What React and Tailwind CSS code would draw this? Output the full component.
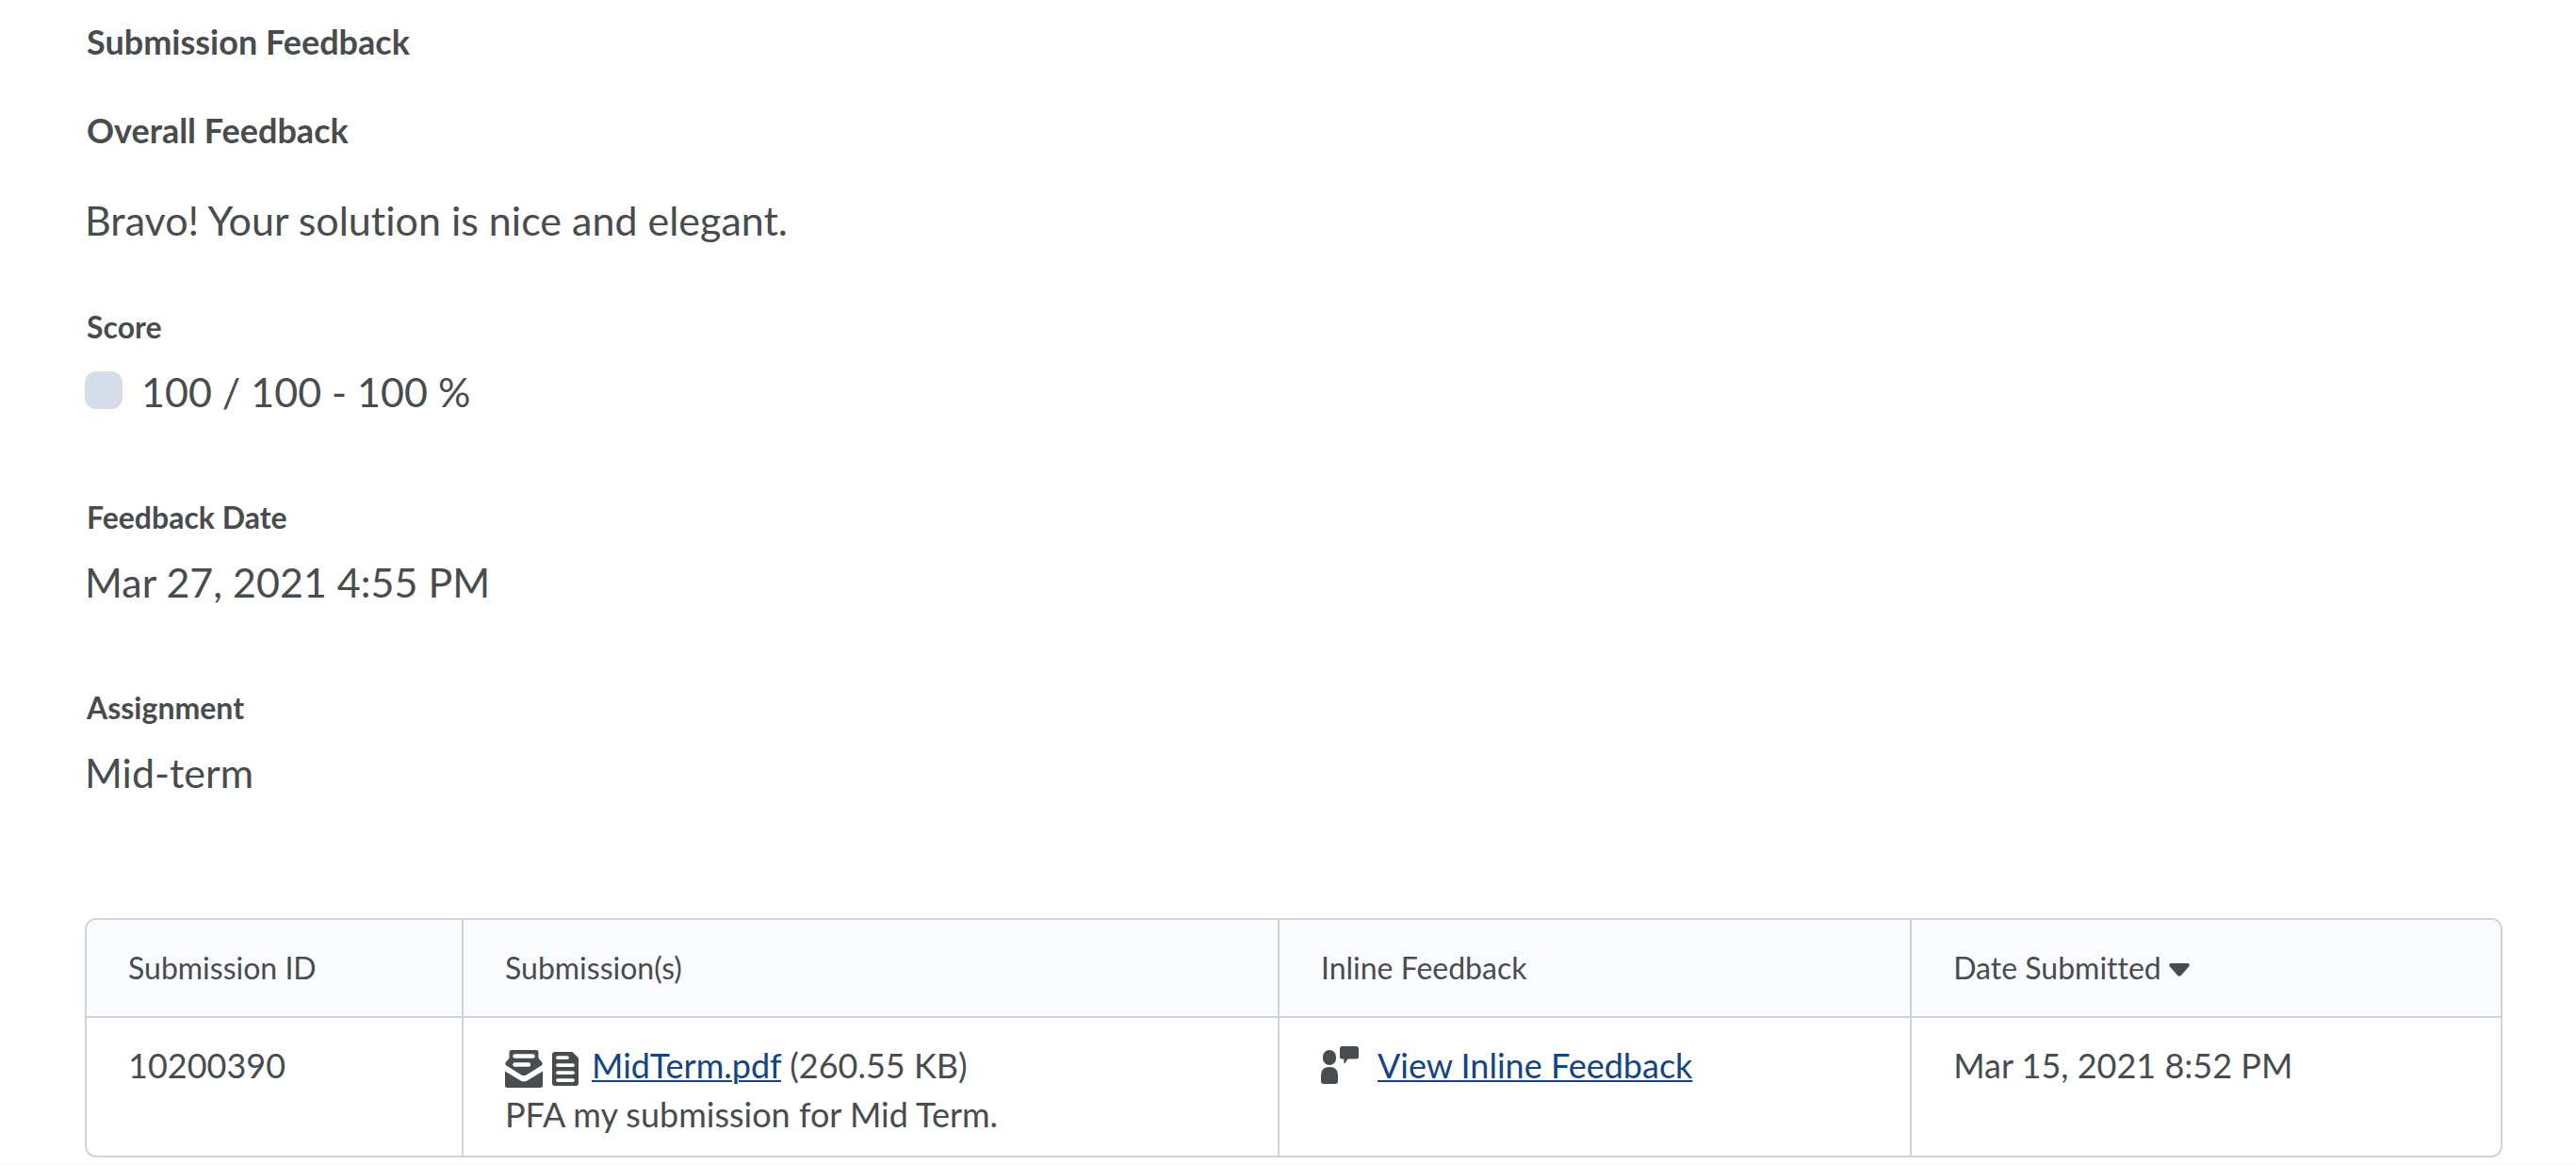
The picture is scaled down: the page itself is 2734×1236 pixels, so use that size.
function EnvelopeIcon() {
  return (
    <svg viewBox="0 0 40 40" className="mt-2 size-10 shrink-0" aria-hidden="true">
      <path
        fill="currentColor"
        fillRule="evenodd"
        d="M7 0H33Q35.500 0 35.500 2.500V8.500L39.300 13.200Q40.600 15 38.500 16.400L23 26.200Q20 28 17 26.200L1.500 16.400Q-0.600 15 0.700 13.200L4.500 8.500V2.500Q4.500 0 7 0ZM10.500 4.300A2.200 2.200 0 0 0 10.500 8.700H29.500A2.200 2.200 0 0 0 29.500 4.300ZM10.500 13.300A2.200 2.200 0 0 0 10.500 17.700H25A2.200 2.200 0 0 0 25 13.300Z"
      />
      <path
        fill="currentColor"
        d="M0 22.500L16.500 32.600Q20 34.600 23.500 32.600L40 22.500V37.500Q40 40 37.500 40H2.500Q0 40 0 37.500Z"
      />
    </svg>
  );
}

function DocumentIcon() {
  return (
    <svg viewBox="0 0 40 40" className="mt-2 ml-1 size-10 shrink-0" aria-hidden="true">
      <path
        fill="currentColor"
        fillRule="evenodd"
        d="M9 2H27.500L34 8.500V35Q34 38 31 38H9Q6 38 6 35V5Q6 2 9 2ZM12 6.200A1.900 1.900 0 0 0 12 10H22A1.900 1.900 0 0 0 22 6.200ZM12 14.200A1.900 1.900 0 0 0 12 18H28A1.900 1.900 0 0 0 28 14.200ZM12 22.200A1.900 1.900 0 0 0 12 26H28A1.900 1.900 0 0 0 28 22.200ZM12 30.200A1.900 1.900 0 0 0 12 34H28A1.900 1.900 0 0 0 28 30.200Z"
      />
    </svg>
  );
}

function PersonCommentIcon() {
  return (
    <svg viewBox="0 0 40 40" className="size-10 shrink-0" fill="currentColor" aria-hidden="true">
      <rect x="2" y="4" width="14" height="16" rx="7" />
      <path d="M0 31Q0 22 9 22Q18 22 18 31V37Q18 40 15 40H3Q0 40 0 37Z" />
      <path d="M22.500 0H37.500Q40 0 40 2.500V11Q40 13.500 37.500 13.500H28.500L25.500 18Q24.500 18.600 24.300 17.500V13.500H22.500Q20 13.500 20 11V2.500Q20 0 22.500 0Z" />
    </svg>
  );
}

function SortCaret() {
  return (
    <svg viewBox="0 0 22 14" className="mt-1 h-[14px] w-[22px]" aria-hidden="true">
      <path
        fill="currentColor"
        d="M2 0H20Q22.500 0.500 21.500 3L13 12.800Q11 14.800 9 12.800L0.500 3Q-0.500 0.500 2 0Z"
      />
    </svg>
  );
}

function Field({ label, children }) {
  return (
    <>
      <dt className="pl-0.5 text-[32px] leading-[48px] font-bold">{label}</dt>
      <dd className="mt-[15px] mb-[79px] flex gap-5 text-[43px] leading-[60px] last:mb-0">{children}</dd>
    </>
  );
}

const HEAD =
  "border-b-2 border-l-2 border-[#cdd5dc] first:border-l-0 px-11 py-[25px] text-left text-[32px] leading-[52px] font-normal";
const CELL =
  "border-l-2 border-[#cdd5dc] first:border-l-0 px-11 pt-6 pb-[18px] align-top text-[36px] leading-[52px]";
const LINK = "text-[#114586] underline decoration-2 underline-offset-2";

export default function App() {
  return (
    <div className="bg-white font-['Lato',sans-serif] text-[#494c4e] [font-variant-ligatures:none]">
      <main className="pt-[18px] pr-[78px] pb-[6px] pl-[90px]">
        <h1 className="pl-0.5 text-[36px] leading-[52px] font-bold">Submission Feedback</h1>
        <h2 className="mt-[42px] pl-0.5 text-[36px] leading-[52px] font-bold">Overall Feedback</h2>
        <p className="mt-10 text-[43px] leading-[60px]">Bravo! Your solution is nice and elegant.</p>

        <dl className="mt-[59px]">
          <Field label="Score">
            <span className="mt-2 size-10 rounded-xl bg-[#d6ddea]" />
            <span>100 / 100 - 100 %</span>
          </Field>
          <Field label="Feedback Date">Mar 27, 2021 4:55 PM</Field>
          <Field label="Assignment">Mid-term</Field>
        </dl>

        <div className="mt-[124px] overflow-hidden rounded-xl border-2 border-[#cdd5dc]">
          <table className="w-full table-fixed border-separate border-spacing-0">
            <thead className="bg-[#fafbff]">
              <tr>
                <th scope="col" className={`${HEAD} w-[398px]`}>Submission ID</th>
                <th scope="col" className={`${HEAD} w-[33.8%]`}>Submission(s)</th>
                <th scope="col" className={`${HEAD} w-[26.2%]`}>Inline Feedback</th>
                <th scope="col" aria-sort="descending" className={HEAD}>
                  <button type="button" className="flex items-center gap-2">
                    Date Submitted
                    <SortCaret />
                  </button>
                </th>
              </tr>
            </thead>
            <tbody>
              <tr>
                <td className={CELL}>10200390</td>
                <td className={CELL}>
                  <div className="flex h-[52px] items-center">
                    <EnvelopeIcon />
                    <DocumentIcon />
                    <span className="ml-2">
                      <a href="#midterm" className={LINK}>MidTerm.pdf</a> (260.55 KB)
                    </span>
                  </div>
                  <p>PFA my submission for Mid Term.</p>
                </td>
                <td className={CELL}>
                  <div className="flex h-[52px] items-center gap-5">
                    <PersonCommentIcon />
                    <a href="#inline-feedback" className={LINK}>View Inline Feedback</a>
                  </div>
                </td>
                <td className={CELL}>Mar 15, 2021 8:52 PM</td>
              </tr>
            </tbody>
          </table>
        </div>
      </main>
      <div className="h-0.5 bg-[#f9f9f9]" />
    </div>
  );
}
